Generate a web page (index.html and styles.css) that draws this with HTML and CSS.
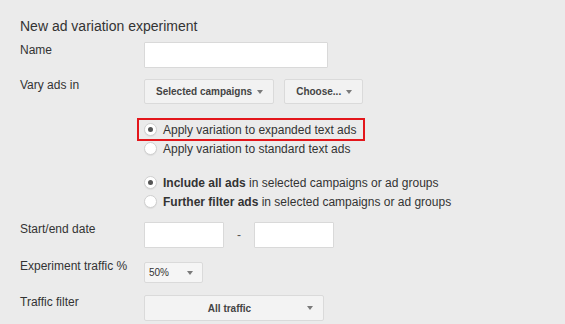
FILE: index.html
```html
<!DOCTYPE html>
<html lang="en">
<head>
    <meta charset="UTF-8">
    <meta name="viewport" content="width=device-width, initial-scale=1.0">
    <title>New ad variation experiment</title>
    <link rel="stylesheet" href="styles.css">
</head>
<body>
    <div class="page">
        <h1 class="title">New ad variation experiment</h1>

        <div class="row row-name">
            <label class="label label-name" for="name">Name</label>
            <input class="field field-name" id="name" type="text">
        </div>

        <div class="row row-vary">
            <span class="label label-vary">Vary ads in</span>
            <div class="buttons">
                <button class="dropdown" type="button">Selected campaigns <span class="caret"></span></button>
                <button class="dropdown" type="button">Choose... <span class="caret"></span></button>
            </div>
        </div>

        <div class="options options-variation">
            <label class="option highlight">
                <input class="radio" type="radio" name="variation" checked>
                <span class="option-text">Apply variation to expanded text ads</span>
            </label>
            <label class="option">
                <input class="radio" type="radio" name="variation">
                <span class="option-text">Apply variation to standard text ads</span>
            </label>
        </div>

        <div class="options options-filter">
            <label class="option">
                <input class="radio" type="radio" name="filter" checked>
                <span class="option-text"><b>Include all ads</b> in selected campaigns or ad groups</span>
            </label>
            <label class="option">
                <input class="radio" type="radio" name="filter">
                <span class="option-text"><b>Further filter ads</b> in selected campaigns or ad groups</span>
            </label>
        </div>

        <div class="row row-dates">
            <span class="label">Start/end date</span>
            <input class="field field-date" type="text">
            <span class="dash">-</span>
            <input class="field field-date" type="text">
        </div>

        <div class="row row-percent">
            <span class="label label-percent">Experiment traffic %</span>
            <div class="select select-percent">
                <span class="select-text">50%</span>
                <span class="caret"></span>
            </div>
        </div>

        <div class="row row-traffic">
            <span class="label">Traffic filter</span>
            <div class="select select-traffic">
                <span class="select-text">All traffic</span>
                <span class="caret"></span>
            </div>
        </div>
    </div>
</body>
</html>
```

FILE: styles.css
```css
body {
    margin: 0;
    background: #ebebeb;
    font-family: "Liberation Sans", Arial, sans-serif;
    color: #333;
}
.page {
    padding: 18px 20px 0;
}
.title {
    margin: 0;
    font-size: 14px;
    line-height: 16px;
    font-weight: normal;
    color: #333;
}
.row {
    display: flex;
    align-items: flex-start;
}
.label {
    width: 124px;
    flex-shrink: 0;
    font-size: 12px;
    line-height: 14px;
}
.row-name {
    margin-top: 8px;
}
.label-name {
    margin-top: 1px;
}
.row-vary {
    margin-top: 11px;
}
.label-vary {
    margin-top: -1px;
}
.row-dates {
    margin-top: 11px;
    align-items: center;
}
.row-dates .label {
    align-self: flex-start;
}
.row-percent {
    margin-top: 14px;
}
.label-percent {
    margin-top: -3px;
}
.row-traffic {
    margin-top: 12px;
}

/* text inputs */
.field {
    box-sizing: border-box;
    height: 26px;
    margin: 0;
    background: #fff;
    border: 1px solid #d9d9d9;
    border-radius: 1px;
    font: inherit;
}
.field-name {
    width: 184px;
}
.field-date {
    width: 80px;
}
.dash {
    width: 30px;
    text-align: center;
    font-size: 12px;
    color: #555;
}

/* buttons and selects */
.buttons {
    display: flex;
    gap: 10px;
}
.dropdown {
    box-sizing: border-box;
    height: 25px;
    margin: 0;
    padding: 0 10px 0 11px;
    display: flex;
    align-items: center;
    gap: 5px;
    background: #f2f2f2;
    border: 1px solid #dadada;
    border-radius: 2px;
    font-family: "Liberation Sans", Arial, sans-serif;
    font-size: 10px;
    font-weight: bold;
    color: #444;
    white-space: nowrap;
}
.caret {
    display: inline-block;
    width: 0;
    height: 0;
    border-top: 4px solid #7a7a7a;
    border-left: 3.5px solid transparent;
    border-right: 3.5px solid transparent;
}
.select {
    box-sizing: border-box;
    display: flex;
    align-items: center;
    border: 1px solid #dadada;
    border-radius: 2px;
    background: #f3f3f3;
    font-size: 10px;
    color: #333;
}
.select-percent {
    width: 59px;
    height: 21px;
    padding: 0 9px 0 4px;
    background: #f5f5f5;
}
.select-percent .select-text {
    flex: 1;
}
.select-traffic {
    width: 180px;
    height: 26px;
    padding: 0 10px 0 7px;
    font-weight: bold;
    color: #444;
}
.select-traffic .select-text {
    flex: 1;
    text-align: center;
}

/* radio groups */
.options {
    margin-left: 124px;
    font-size: 12px;
    color: #333;
}
.options-variation {
    margin-top: 16px;
}
.options-filter {
    margin-top: 15px;
}
.option {
    display: flex;
    align-items: center;
    width: max-content;
    height: 19px;
    white-space: nowrap;
}
.highlight {
    margin-left: -5px;
    padding: 0 7px 0 5px;
    outline: 2px solid #e3161b;
}
.radio {
    appearance: none;
    -webkit-appearance: none;
    box-sizing: border-box;
    width: 13px;
    height: 13px;
    margin: 0 6px 0 0;
    border: 1px solid #cfcfcf;
    border-radius: 50%;
    background: #fff;
    box-shadow: 0 1px 1px rgba(0, 0, 0, 0.06);
    display: grid;
    place-items: center;
}
.radio:checked::after {
    content: "";
    width: 5px;
    height: 5px;
    border-radius: 50%;
    background: #555;
}
```
